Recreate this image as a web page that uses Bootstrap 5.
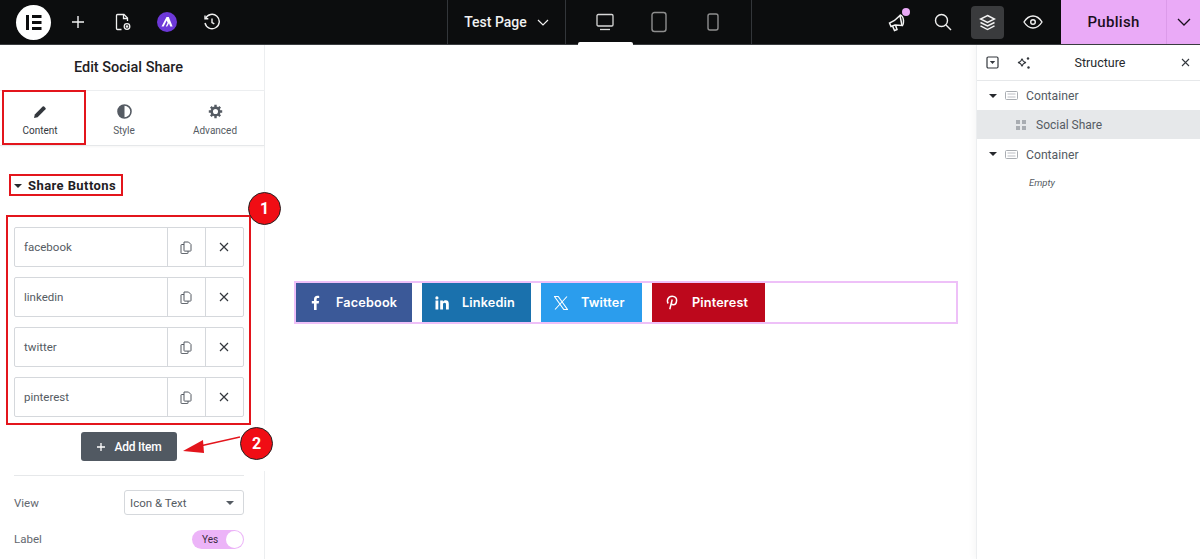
<!DOCTYPE html>
<html lang="en"><head><meta charset="utf-8"><title>Edit Social Share</title>
<link href="https://cdn.jsdelivr.net/npm/bootstrap@5.3.0/dist/css/bootstrap.min.css" rel="stylesheet">
<style>
html,body{height:559px;overflow:hidden}
body{font-family:Roboto,"Liberation Sans",sans-serif;color:#3f444b;background:#fff;position:relative}
svg{display:block}
.tb{height:45px;background:#0c0d0e;border-bottom:1px solid #3a3d40;color:#fff}
.tb-left{width:447px;padding-left:16px}
.tb-logo{width:35px;height:35px;border-radius:50%;background:#fff;margin-right:5px}
.tb-ic{width:44.5px}
.tb-page{width:119px;border-left:1px solid #33363a;border-right:1px solid #33363a;font-size:14px;font-weight:500;gap:10px;color:#f1f1f1}
.tb-dev{width:186px;border-right:1px solid #33363a;position:relative;padding-left:12px}
.tb-devitem{width:54px}
.tb-notch{position:absolute;left:12px;bottom:-1px;width:55px;height:3px;background:#fff;border-radius:2px 2px 0 0}
.tb-right{width:309px;padding-right:6px;justify-content:flex-end}
.tb-rbtn{width:45px;height:33px;border-radius:4px}
.tb-rbtn.on{background:#3a3b3d;width:33px;margin:0 6px}
.tb-pub{width:105px;background:#eaaaf7;color:#1a0f1d;font-size:15px;font-weight:500;letter-spacing:.3px;height:44px}
.tb-caret{width:34px;background:#eaaaf7;border-left:1px solid #dc9bea;height:44px}
.dot-n{position:absolute;width:8px;height:8px;border-radius:50%;background:#eaaaf7;top:-4px;right:-2px}
.main{height:514px}
.sb{width:265px;border-right:1px solid #eceef0;background:#fff}
.sb-title{height:46px;font-size:14.5px;font-weight:500;color:#1f2124;padding-right:7px;border-bottom:1px solid #eceef0}
.sb-tabs{height:55px;border-bottom:1px solid #e6e8ea;box-shadow:0 1px 2px rgba(0,0,0,.04)}
.sb-tab{font-size:10px;color:#555b63;gap:4px;padding-top:6px}
.sb-tab.w1{width:80px}.sb-tab.w2{width:88px}.sb-tab.w3{width:94px}
.sb-tab.act{color:#33373d}
.sec-head{margin:29px 0 0 14px;height:22px;font-size:13px;font-weight:700;color:#1f2124;gap:6px;letter-spacing:.42px}
.tri{width:0;height:0;border-left:4px solid transparent;border-right:4px solid transparent;border-top:4px solid #26292d}
.reps{margin:30px 20px 0 14px;gap:10px}
.rep{height:40px;border:1px solid #d5d8dc;border-radius:2px;font-size:11.5px;color:#555b63}
.rep-name{flex:1;padding:2px 0 0 9px}
.rep-a{width:38px;border-left:1px solid #d5d8dc;height:100%;padding-right:1px}
.add-wrap{margin-top:15px}
.add-btn{width:96px;height:29px;background:#515962;color:#fff;font-size:12px;font-weight:500;border-radius:3px;gap:8px;padding:0;border:0;letter-spacing:-.2px}
.add-btn:hover{background:#515962;color:#fff}
.sep{margin:14px 20px 0 14px;border-top:1px solid #e6e8ea}
.prop{margin:14px 20px 0 14px;font-size:11.5px;color:#63686f}
.prop-t{padding-top:2px}
.sel{width:120px;height:25px;border:1px solid #d5d8dc;border-radius:3px;padding:0 9px 0 5px;color:#555b63;font-size:11.5px}
.prop2{margin:15px 20px 0 14px;font-size:11.5px;color:#63686f}
.sw{width:52px;height:19px;border-radius:10px;background:#ecb4f8;font-size:10px;color:#3a2a40;padding-left:10px;position:relative}
.sw-k{position:absolute;right:1px;top:1px;width:17px;height:17px;border-radius:50%;background:#fff}
.cv{flex:1;padding:236px 18px 0 29px;background:#fff}
.cv-box{border:2px solid #eec0f8;height:43px;width:664px;gap:10px;background:#fff}
.sh{height:39px;color:#fff;font-family:Inter,Roboto,sans-serif;font-size:12.7px;font-weight:600;letter-spacing:.15px}
.sh-ic{width:40px}
.sh.fb{width:116px;background:#3b5998}.sh.li{width:109px;background:#1a71ad}.sh.tw{width:101px;background:#2b9ded}.sh.pi{width:113px;background:#bd081c}
.nv{width:224px;margin-left:-1px;border-left:1px solid #eceef0;box-shadow:-3px 0 6px rgba(0,0,0,.03)}
.nv-head{height:36px;border-bottom:1px solid #e6e8ea;font-size:12.5px;color:#26292d;padding:0 10px 0 9px}
.nv-title{flex:1;text-align:center;padding:2px 12px 0 0}
.nv-row{height:29px;font-size:12.2px;color:#555b63;padding-left:12px;gap:8px}
.nv-txt{padding-top:2px}
.nv-row.sel-row{background:#e6e8ea;padding-left:39px;gap:10px;font-size:12px}
.nv-row.third{height:30px}
.nv-empty{height:28px;font-size:9.5px;font-style:italic;color:#555b63;padding-left:52px}
.ov{position:absolute;border:2px solid #e3151c;pointer-events:none}
.mask{position:absolute;left:262px;top:425px;width:16px;height:46px;background:#fff}
.bub{position:absolute;width:33px;height:33px;border-radius:50%;background:#f00d14;color:#fff;border:1px solid #222;font-size:16px;font-weight:700}
.arrow{position:absolute;left:180px;top:430px}
</style></head><body>
<div class="tb d-flex align-items-center">
 <div class="tb-left d-flex align-items-center">
  <div class="tb-logo d-flex align-items-center justify-content-center flex-shrink-0"><svg width="17" height="15" viewBox="0 0 17 15"><rect x="1" width="3" height="15" fill="#0c0d0e"/><rect x="7" width="9.500" height="3" fill="#0c0d0e"/><rect x="7" y="6" width="9.500" height="3" fill="#0c0d0e"/><rect x="7" y="12" width="9.500" height="3" fill="#0c0d0e"/></svg></div>
  <div class="tb-ic d-flex justify-content-center"><svg width="16" height="16" viewBox="0 0 16 16"><path d="M8 2v12M2 8h12" stroke="#f2f2f2" stroke-width="1.400"/></svg></div>
  <div class="tb-ic d-flex justify-content-center"><svg width="20" height="20" viewBox="0 0 20 20" fill="none" stroke="#f0f0f0" stroke-width="1.300"><path d="M8.500 17.500H4.500a1 1 0 0 1-1-1V3.500a1 1 0 0 1 1-1h6.500l3.500 3.500V9"/><path d="M10.500 2.500V6.500h4"/><circle cx="14" cy="14.500" r="2.800"/><circle cx="14" cy="14.500" r=".7"/></svg></div>
  <div class="tb-ic d-flex justify-content-center"><svg width="20" height="20" viewBox="0 0 20 20"><circle cx="10" cy="10" r="10" fill="#6d38d8"/><path d="M4.500 14.500 9.500 5h2.300l3.800 9.500h-2.400l-1.200-3.300-1.800 3.300h-1.400l1.800-3.700-.9-2.300-3 6z" fill="#fff"/></svg></div>
  <div class="tb-ic d-flex justify-content-center"><svg width="18" height="18" viewBox="0 0 18 18" fill="none" stroke="#f0f0f0" stroke-width="1.400"><path d="M2.500 5.500A7.200 7.200 0 1 1 2 10"/><path d="M2 2.500v3.300h3.300"/><path d="M9 5.500V9.500l2.300 1.300"/></svg></div>
 </div>
 <div class="tb-page d-flex align-items-center justify-content-center h-100">Test Page <svg width="12" height="12" viewBox="0 0 12 12" fill="none" stroke="#f1f1f1" stroke-width="1.200"><path d="M1 4l5 5 5-5"/></svg></div>
 <div class="tb-dev d-flex align-items-center h-100">
  <div class="tb-devitem d-flex justify-content-center"><svg width="20" height="20" viewBox="0 0 20 20" fill="none" stroke="#d8d8d8" stroke-width="1.300"><rect x="2" y="2.500" width="16" height="11.500" rx="1.200"/><path d="M5 17.500h10"/></svg></div>
  <div class="tb-devitem d-flex justify-content-center"><svg width="18" height="22" viewBox="0 0 18 22" fill="none" stroke="#8e8e8e" stroke-width="1.400"><rect x="2" y="1.500" width="14" height="19" rx="2.500"/></svg></div>
  <div class="tb-devitem d-flex justify-content-center"><svg width="14" height="20" viewBox="0 0 14 20" fill="none" stroke="#8e8e8e" stroke-width="1.400"><rect x="2" y="2" width="10" height="16" rx="2"/></svg></div>
  <div class="tb-notch"></div>
 </div>
 <div class="tb-right d-flex align-items-center h-100">
  <div class="tb-rbtn d-flex align-items-center justify-content-center"><span class="position-relative d-block"><svg width="20" height="20" viewBox="0 0 20 20" fill="none" stroke="#f4f4f4" stroke-width="1.500"><path d="M1.500 11 3 14.500 7 13 14 13.500 12 3.500 6.500 8.500z"/><path d="M4.500 14l2 4.500 2.500-1-1.500-4.500"/><path d="M12 3.500c1.500-.8 3.500 2 3.500 5s-.500 5-1.500 5"/></svg><span class="dot-n"></span></span></div>
  <div class="tb-rbtn d-flex align-items-center justify-content-center"><svg width="18" height="18" viewBox="0 0 18 18" fill="none" stroke="#f0f0f0" stroke-width="1.400"><circle cx="7.500" cy="7.500" r="6"/><path d="M12 12l5 5"/></svg></div>
  <div class="tb-rbtn on d-flex align-items-center justify-content-center"><svg width="17" height="17" viewBox="0 0 17 17" fill="none" stroke="#f4f4f4" stroke-width="1.400"><path d="M8.500 1.500l7 3.500-7 3.500-7-3.500z"/><path d="M1.500 8.500l7 3.500 7-3.500"/><path d="M1.500 11.800l7 3.700 7-3.700"/></svg></div>
  <div class="tb-rbtn d-flex align-items-center justify-content-center"><svg width="20" height="14" viewBox="0 0 20 14" fill="none" stroke="#f0f0f0" stroke-width="1.400"><path d="M1 7c2.500-4 5.500-6 9-6s6.500 2 9 6c-2.500 4-5.500 6-9 6s-6.500-2-9-6z"/><circle cx="10" cy="7" r="2.300"/></svg></div>
 </div>
 <div class="tb-pub d-flex align-items-center justify-content-center align-self-start flex-shrink-0">Publish</div>
 <div class="tb-caret d-flex align-items-center justify-content-center align-self-start flex-shrink-0"><svg width="14" height="14" viewBox="0 0 14 14" fill="none" stroke="#1a0f1d" stroke-width="1.300"><path d="M1 4l6 6 6-6"/></svg></div>
</div>
<div class="main d-flex">
 <aside class="sb flex-shrink-0 d-flex flex-column">
  <div class="sb-title d-flex align-items-center justify-content-center">Edit Social Share</div>
  <div class="sb-tabs d-flex">
   <div class="sb-tab w1 act d-flex flex-column align-items-center justify-content-center"><svg width="14" height="14" viewBox="0 0 14 14"><path d="M1 13l.8-3.600L9.700 1.500a1 1 0 0 1 1.400 0l1.400 1.400a1 1 0 0 1 0 1.400L4.600 12.200z" fill="#33373d"/></svg><span>Content</span></div>
   <div class="sb-tab w2 d-flex flex-column align-items-center justify-content-center"><svg width="15" height="15" viewBox="0 0 15 15"><circle cx="7.500" cy="7.500" r="6.500" fill="none" stroke="#555b63" stroke-width="1.600"/><path d="M7.500 1a6.500 6.500 0 0 0 0 13z" fill="#555b63"/></svg><span>Style</span></div>
   <div class="sb-tab w3 d-flex flex-column align-items-center justify-content-center"><svg width="15" height="15" viewBox="0 0 15 15"><circle cx="7.500" cy="7.500" r="3.800" fill="none" stroke="#555b63" stroke-width="2.500"/><path d="M7.500 .8v2.500M7.500 11.700v2.500M.8 7.500h2.500M11.700 7.500h2.500M2.800 2.800l1.700 1.700M10.500 10.500l1.700 1.700M12.200 2.800l-1.700 1.700M4.500 10.500l-1.700 1.700" stroke="#555b63" stroke-width="2.400"/></svg><span>Advanced</span></div>
  </div>
  <div class="sec-head d-flex align-items-center"><span class="tri"></span>Share Buttons</div>
  <div class="reps d-flex flex-column">
   <div class="rep d-flex align-items-center"><div class="rep-name">facebook</div><div class="rep-a d-flex align-items-center justify-content-center"><svg width="12" height="13" viewBox="0 0 12 13" fill="none" stroke="#555b63" stroke-width="1"><path d="M4 1h4.500L11 3.500v6a.6.6 0 0 1-.6.6H4.600A.6.600 0 0 1 4 9.500z"/><path d="M4 3.500H1.600A.6.600 0 0 0 1 4v8a.6.600 0 0 0 .6.600h5.800a.6.600 0 0 0 .6-.6v-1.900"/></svg></div><div class="rep-a d-flex align-items-center justify-content-center"><svg width="10" height="10" viewBox="0 0 10 10"><path d="M1 1l8 8M9 1l-8 8" stroke="#33373d" stroke-width="1.200"/></svg></div></div>
   <div class="rep d-flex align-items-center"><div class="rep-name">linkedin</div><div class="rep-a d-flex align-items-center justify-content-center"><svg width="12" height="13" viewBox="0 0 12 13" fill="none" stroke="#555b63" stroke-width="1"><path d="M4 1h4.500L11 3.500v6a.6.6 0 0 1-.6.6H4.600A.6.600 0 0 1 4 9.500z"/><path d="M4 3.500H1.600A.6.600 0 0 0 1 4v8a.6.600 0 0 0 .6.600h5.800a.6.600 0 0 0 .6-.6v-1.900"/></svg></div><div class="rep-a d-flex align-items-center justify-content-center"><svg width="10" height="10" viewBox="0 0 10 10"><path d="M1 1l8 8M9 1l-8 8" stroke="#33373d" stroke-width="1.200"/></svg></div></div>
   <div class="rep d-flex align-items-center"><div class="rep-name">twitter</div><div class="rep-a d-flex align-items-center justify-content-center"><svg width="12" height="13" viewBox="0 0 12 13" fill="none" stroke="#555b63" stroke-width="1"><path d="M4 1h4.500L11 3.500v6a.6.6 0 0 1-.6.6H4.600A.6.600 0 0 1 4 9.500z"/><path d="M4 3.500H1.600A.6.600 0 0 0 1 4v8a.6.600 0 0 0 .6.600h5.800a.6.600 0 0 0 .6-.6v-1.900"/></svg></div><div class="rep-a d-flex align-items-center justify-content-center"><svg width="10" height="10" viewBox="0 0 10 10"><path d="M1 1l8 8M9 1l-8 8" stroke="#33373d" stroke-width="1.200"/></svg></div></div>
   <div class="rep d-flex align-items-center"><div class="rep-name">pinterest</div><div class="rep-a d-flex align-items-center justify-content-center"><svg width="12" height="13" viewBox="0 0 12 13" fill="none" stroke="#555b63" stroke-width="1"><path d="M4 1h4.500L11 3.500v6a.6.6 0 0 1-.6.6H4.600A.6.600 0 0 1 4 9.500z"/><path d="M4 3.500H1.600A.6.600 0 0 0 1 4v8a.6.600 0 0 0 .6.600h5.800a.6.600 0 0 0 .6-.6v-1.900"/></svg></div><div class="rep-a d-flex align-items-center justify-content-center"><svg width="10" height="10" viewBox="0 0 10 10"><path d="M1 1l8 8M9 1l-8 8" stroke="#33373d" stroke-width="1.200"/></svg></div></div>
  </div>
  <div class="add-wrap d-flex justify-content-center" style="padding-right:6px"><button class="btn add-btn d-flex align-items-center justify-content-center" type="button"><svg width="10" height="10" viewBox="0 0 10 10"><path d="M5 1v8M1 5h8" stroke="#fff" stroke-width="1.300"/></svg>Add Item</button></div>
  <div class="sep"></div>
  <div class="prop d-flex align-items-center justify-content-between"><span class="prop-t">View</span><div class="sel d-flex align-items-center justify-content-between"><span class="prop-t">Icon &amp; Text</span><span class="tri" style="border-top-color:#555b63"></span></div></div>
  <div class="prop2 d-flex align-items-center justify-content-between"><span>Label</span><div class="sw d-flex align-items-center">Yes<span class="sw-k"></span></div></div>
 </aside>
 <section class="cv">
  <div class="cv-box d-flex align-items-center">
   <div class="sh fb d-flex align-items-center"><span class="sh-ic d-flex justify-content-center"><svg width="10" height="15" viewBox="0 0 10 15"><path d="M3 15V8.500H.8V6H3V4.200C3 2 4.300.8 6.300.8c1 0 1.700.1 1.900.1v2.200H6.900c-1 0-1.300.6-1.300 1.300V6h2.500l-.4 2.500H5.600V15z" fill="#fff"/></svg></span>Facebook</div>
   <div class="sh li d-flex align-items-center"><span class="sh-ic d-flex justify-content-center"><svg width="14" height="14" viewBox="0 0 14 14" fill="#fff"><rect x=".5" y="4.500" width="2.800" height="9"/><circle cx="1.900" cy="1.900" r="1.600"/><path d="M5.200 4.500h2.700v1.300c.5-.9 1.500-1.500 2.800-1.500 2.500 0 3.100 1.600 3.100 3.800v5.400H11V8.700c0-1.100-.2-2-1.400-2-1.300 0-1.600.9-1.600 2v4.800H5.200z"/></svg></span>Linkedin</div>
   <div class="sh tw d-flex align-items-center"><span class="sh-ic d-flex justify-content-center"><svg width="14" height="14" viewBox="0 0 14 14"><path d="M.5 .5h3.700l9.300 13H9.800zM13 .5 1 13.500" fill="none" stroke="#fff" stroke-width="1.100"/></svg></span>Twitter</div>
   <div class="sh pi d-flex align-items-center"><span class="sh-ic d-flex justify-content-center"><svg width="12" height="15" viewBox="0 0 12 15" fill="none" stroke="#fff" stroke-width="1.500"><path d="M2.200 8.500C.5 6 1.800 1.200 6.200 1.200c3 0 4.600 2 4.400 4.400-.2 2.600-1.700 4.200-3.400 4.200-1.100 0-1.900-.7-1.900-1.700M6.200 4.500 3.800 14.200"/></svg></span>Pinterest</div>
  </div>
 </section>
 <aside class="nv flex-shrink-0">
  <div class="nv-head d-flex align-items-center"><svg width="13" height="13" viewBox="0 0 13 13" fill="none"><rect x="1" y="1" width="11" height="11" rx="1.200" stroke="#33373d" stroke-width="1.200"/><path d="M3.800 5h5.400L6.500 8z" fill="#33373d"/></svg><svg style="margin-left:18px" width="14" height="14" viewBox="0 0 14 14" fill="none"><path d="M5 2.500c.5 2.500 1.500 3.500 4 4-2.500.5-3.500 1.500-4 4-.5-2.500-1.500-3.500-4-4 2.500-.5 3.500-1.500 4-4z" stroke="#33373d" stroke-width="1.100"/><circle cx="11" cy="2.500" r="1.200" fill="#33373d"/><circle cx="11.500" cy="11.500" r="1.200" fill="#33373d"/></svg><span class="nv-title">Structure</span><svg width="9" height="9" viewBox="0 0 9 9"><path d="M1 1l7 7M8 1l-7 7" stroke="#33373d" stroke-width="1.100"/></svg></div>
  <div class="nv-row d-flex align-items-center"><span class="tri"></span><svg width="13" height="9" viewBox="0 0 13 9" fill="none"><rect x=".5" y=".5" width="12" height="8" rx="1" stroke="#a9adb2"/><path d="M2.500 3h8M2.500 6h8" stroke="#d2d4d7" stroke-width="1.500"/></svg><span class="nv-txt">Container</span></div>
  <div class="nv-row sel-row d-flex align-items-center"><svg width="10" height="10" viewBox="0 0 10 10" fill="#a9adb2"><rect width="4" height="4"/><rect x="6" width="4" height="4"/><rect y="6" width="4" height="4"/><rect x="6" y="6" width="4" height="4"/></svg><span>Social Share</span></div>
  <div class="nv-row third d-flex align-items-center"><span class="tri"></span><svg width="13" height="9" viewBox="0 0 13 9" fill="none"><rect x=".5" y=".5" width="12" height="8" rx="1" stroke="#a9adb2"/><path d="M2.500 3h8M2.500 6h8" stroke="#d2d4d7" stroke-width="1.500"/></svg><span class="nv-txt">Container</span></div>
  <div class="nv-empty d-flex align-items-center">Empty</div>
 </aside>
</div>
<div class="mask"></div>
<div class="ov" style="left:2px;top:90px;width:84px;height:55px"></div>
<div class="ov" style="left:9px;top:174px;width:114px;height:22px"></div>
<div class="ov" style="left:6px;top:215px;width:245px;height:210px"></div>
<div class="bub d-flex align-items-center justify-content-center" style="left:248px;top:192px">1</div>
<svg class="arrow" width="60" height="30" viewBox="0 0 60 30"><path d="M20 16 60 7" stroke="#e3151c" stroke-width="1.600"/><path d="M3 21 23 10l1 13z" fill="#e3151c"/></svg>
<div class="bub d-flex align-items-center justify-content-center" style="left:240px;top:427px">2</div>
</body></html>
